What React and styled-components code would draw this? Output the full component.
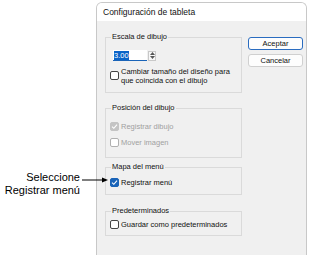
import React from "react";
import styled, { createGlobalStyle } from "styled-components";

const GlobalStyle = createGlobalStyle`
    html, body {
        margin: 0;
        padding: 0;
        background: #ffffff;
        overflow: hidden;
    }
`;

const Page = styled.div`
    position: relative;
    width: 325px;
    height: 255px;
    display: flex;
    align-items: flex-start;
    font-family: "Liberation Sans", Arial, sans-serif;
`;

const Callout = styled.div`
    width: 96px;
    padding-top: 171px;
    padding-right: 16px;
    box-sizing: border-box;
    text-align: right;
    white-space: nowrap;
    font-family: "Liberation Sans", Arial, sans-serif;
    font-size: 11px;
    line-height: 13px;
    color: #000;
`;

const Arrow = styled.svg`
    position: absolute;
    left: 82px;
    top: 176px;
`;

const Dialog = styled.div`
    margin-top: 2px;
    width: 211px;
    height: 260px;
    box-sizing: border-box;
    border: 1px solid #c8c8c8;
    border-bottom: none;
    border-radius: 6px 6px 0 0;
    background: #f0f0f0;
    overflow: hidden;
`;

const TitleBar = styled.div`
    height: 18px;
    background: #ffffff;
    padding-left: 6px;
    font-size: 8.5px;
    line-height: 18px;
    color: #111;
`;

const Body = styled.div`
    display: flex;
    gap: 6px;
    padding: 11px 0 0 8px;
`;

const Groups = styled.div`
    display: flex;
    flex-direction: column;
    width: 137px;
`;

const Group = styled.fieldset`
    margin: ${(p) => p.$top || 0}px 0 0 0;
    padding: 2px 0 0 4px;
    height: ${(p) => p.$height}px;
    box-sizing: border-box;
    border: 1px solid #dadada;
    min-width: 0;
`;

const Legend = styled.legend`
    padding: 0 1px;
    margin-left: 1px;
    font-size: 7.5px;
    line-height: 10px;
    color: #111;
`;

const Row = styled.div`
    display: flex;
    align-items: ${(p) => (p.$top ? "flex-start" : "center")};
    gap: 2px;
    margin-top: ${(p) => p.$mt || 0}px;
    font-size: 7.5px;
    line-height: 9px;
    white-space: nowrap;
    color: ${(p) => (p.$disabled ? "#a0a0a0" : "#111")};
`;

const Box = styled.span`
    flex: none;
    width: 9px;
    height: 9px;
    box-sizing: border-box;
    border-radius: 2px;
    border: 1px solid ${(p) => (p.$checked ? (p.$disabled ? "#c4c4c4" : "#1a64b8") : p.$disabled ? "#b0b0b0" : "#444")};
    background: ${(p) => (p.$checked ? (p.$disabled ? "#c4c4c4" : "#1a64b8") : "#fff")};
    margin-top: ${(p) => p.$mt || 0}px;
    display: flex;
    align-items: center;
    justify-content: center;
`;

const SpinRow = styled.div`
    display: flex;
    align-items: center;
    gap: 1px;
    margin: 6px 0 0 3px;
`;

const NumberInput = styled.div`
    width: 33px;
    height: 10px;
    background: #fff;
    border-bottom: 1.5px solid #1a64b8;
    display: flex;
    align-items: center;
    padding-left: 1px;
`;

const Selected = styled.span`
    background: #0a64c8;
    color: #fff;
    font-size: 7.5px;
    line-height: 9px;
`;

const Spinner = styled.div`
    width: 8px;
    height: 10px;
    box-sizing: border-box;
    border: 1px solid #c8c8c8;
    background: #f7f7f7;
    display: flex;
    flex-direction: column;
    align-items: center;
    justify-content: space-around;
`;

const Buttons = styled.div`
    display: flex;
    flex-direction: column;
    gap: 4px;
    padding-top: 5px;
`;

const Button = styled.div`
    width: 55px;
    height: 13px;
    box-sizing: border-box;
    border: 1px solid ${(p) => (p.$primary ? "#2a6cc0" : "#d0d0d0")};
    border-radius: 3px;
    background: #fdfdfd;
    font-size: 7.5px;
    line-height: 11px;
    text-align: center;
    color: #111;
`;

const Check = ({ color = "#fff" }) => (
    <svg width="7" height="7" viewBox="0 0 7 7">
        <path d="M1 3.6 L2.8 5.3 L6 1.6" fill="none" stroke={color} strokeWidth="1.1" />
    </svg>
);

const CheckBox = ({ checked, disabled, mt }) => (
    <Box $checked={checked} $disabled={disabled} $mt={mt}>
        {checked && <Check />}
    </Box>
);

const App = () => {
    return (
        <Page>
            <GlobalStyle />
            <Callout>
                Seleccione
                <br />
                Registrar menú
            </Callout>
            <Arrow width="28" height="8" viewBox="0 0 28 8">
                <line x1="0" y1="4" x2="22" y2="4" stroke="#000" strokeWidth="1" />
                <path d="M20 1.5 L26 4 L20 6.5 Z" fill="#000" />
            </Arrow>
            <Dialog>
                <TitleBar>Configuración de tableta</TitleBar>
                <Body>
                    <Groups>
                        <Group $height={61}>
                            <Legend>Escala de dibujo</Legend>
                            <SpinRow>
                                <NumberInput>
                                    <Selected>3.00</Selected>
                                </NumberInput>
                                <Spinner>
                                    <svg width="5" height="3" viewBox="0 0 5 3">
                                        <path d="M0 3 L2.5 0 L5 3 Z" fill="#555" />
                                    </svg>
                                    <svg width="5" height="3" viewBox="0 0 5 3">
                                        <path d="M0 0 L2.5 3 L5 0 Z" fill="#555" />
                                    </svg>
                                </Spinner>
                            </SpinRow>
                            <Row $top $mt={6}>
                                <CheckBox mt={4} />
                                <span>
                                    Cambiar tamaño del diseño para
                                    <br />
                                    que coincida con el dibujo
                                </span>
                            </Row>
                        </Group>
                        <Group $top={10} $height={55}>
                            <Legend>Posición del dibujo</Legend>
                            <Row $disabled $mt={7}>
                                <CheckBox checked disabled />
                                Registrar dibujo
                            </Row>
                            <Row $disabled $mt={7}>
                                <CheckBox disabled />
                                Mover imagen
                            </Row>
                        </Group>
                        <Group $top={4} $height={33}>
                            <Legend>Mapa del menú</Legend>
                            <Row $mt={4}>
                                <CheckBox checked />
                                Registrar menú
                            </Row>
                        </Group>
                        <Group $top={11} $height={30}>
                            <Legend>Predeterminados</Legend>
                            <Row $mt={2}>
                                <CheckBox />
                                Guardar como predeterminados
                            </Row>
                        </Group>
                    </Groups>
                    <Buttons>
                        <Button $primary>Aceptar</Button>
                        <Button>Cancelar</Button>
                    </Buttons>
                </Body>
            </Dialog>
        </Page>
    );
};

export default App;
